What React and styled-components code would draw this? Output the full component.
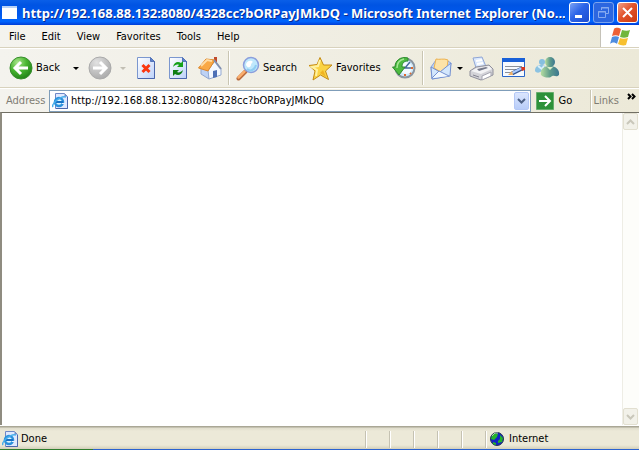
import React, { useState } from 'react';
import styled, { createGlobalStyle } from 'styled-components';

const GlobalStyle = createGlobalStyle`
  * {
    box-sizing: border-box;
  }

  body {
    margin: 0;
    background: #ece9d8;
    font-family: 'DejaVu Sans Condensed', 'Noto Sans', sans-serif;
    font-size: 11px;
    line-height: 14px;
    color: #000;
  }

  button, input {
    font: inherit;
    color: inherit;
  }

  svg {
    display: block;
    flex: none;
  }
`;

const Window = styled.div`
  display: flex;
  flex-direction: column;
  min-height: 100vh;
`;

// Title bar
const TitleBar = styled.header`
  display: flex;
  align-items: center;
  gap: 4px;
  height: 25px;
  padding: 0 1px 0 2px;
  background: linear-gradient(#0a5fe8 0, #0054e3 20%, #0058ee 60%, #0066ff 85%, #003dd7 100%);
`;

const Title = styled.h1`
  flex: 1;
  min-width: 0;
  margin: 0;
  overflow: hidden;
  white-space: nowrap;
  font-family: 'Noto Sans', sans-serif;
  font-size: 13px;
  font-weight: bold;
  line-height: 18px;
  color: #fff;
  text-shadow: 1px 1px #0a2a8c;
`;

const Caption = styled.div`
  display: flex;
  gap: 3px;
`;

const CaptionButton = styled.button`
  display: flex;
  align-items: center;
  justify-content: center;
  width: 21px;
  height: 21px;
  padding: 0;
  border: 1px solid ${(p) => (p.$dim ? '#7ba4ee' : '#fff')};
  border-radius: 3px;
  background: ${(p) =>
    p.$close
      ? 'linear-gradient(135deg, #f0a088, #e2542c 45%, #cb3a10)'
      : p.$dim
        ? '#2c66e0'
        : 'linear-gradient(135deg, #7ba2f4, #2c64e8 45%, #1c4cd0)'};
`;

// Menu bar
const MenuBar = styled.nav`
  display: flex;
  height: 23px;
  border-bottom: 1px solid #d8d2bd;
  background: linear-gradient(90deg, #f4f3ee, #ece9d8);
`;

const MenuButton = styled.button`
  height: 22px;
  padding: 2px 8px 0;
  border: 0;
  background: none;

  &:first-child {
    margin-left: 1px;
  }
`;

const Brand = styled.div`
  display: flex;
  align-items: center;
  justify-content: center;
  width: 39px;
  margin-left: auto;
  border-left: 1px solid #c5c2b8;
  background: #fff;
`;

// Toolbar
const Toolbar = styled.div`
  display: flex;
  align-items: center;
  height: 40px;
  padding-left: 5px;
  border-top: 1px solid #fff;
  border-bottom: 1px solid #d8d2bd;
  background: linear-gradient(90deg, #f4f3ee, #ece9d8);
`;

const ToolButton = styled.button`
  display: flex;
  align-items: center;
  gap: 3px;
  height: 34px;
  padding: 0 ${(p) => (p.$labelled ? 7 : 4)}px 0 4px;
  border: 0;
  background: none;
`;

const DropButton = styled.button`
  display: flex;
  align-items: center;
  justify-content: center;
  width: ${(p) => p.$width}px;
  height: 34px;
  padding: 0;
  border: 0;
  background: none;
`;

const Divider = styled.span`
  flex: none;
  width: 2px;
  height: 34px;
  margin: 0 2px;
  border-left: 1px solid #c9c5b2;
  border-right: 1px solid #fff;
`;

// Address bar
const AddressBar = styled.form`
  display: flex;
  align-items: center;
  gap: 5px;
  height: 24px;
  padding: 0 3px 0 6px;
  border-top: 1px solid #fff;
  background: linear-gradient(90deg, #f4f3ee, #ece9d8);
`;

const AddressLabel = styled.label`
  width: 38px;
  color: #7f7c73;
`;

const AddressBox = styled.div`
  display: flex;
  flex: 1;
  align-items: center;
  min-width: 0;
  height: 22px;
  padding: 0 1px 0 2px;
  border: 1px solid #7f9db9;
  background: #fff;
`;

const AddressInput = styled.input`
  flex: 1;
  min-width: 0;
  height: 18px;
  padding: 0 3px;
  border: 0;
  outline: 0;
  background: none;
`;

const ComboButton = styled.button`
  display: flex;
  align-items: center;
  justify-content: center;
  width: 15px;
  height: 18px;
  padding: 0;
  border: 1px solid #b4c8f6;
  border-radius: 2px;
  background: linear-gradient(#dbe6fe, #b8cdf9);
`;

const GoButton = styled.button`
  display: flex;
  align-items: center;
  gap: 5px;
  width: 49px;
  padding: 0;
  border: 0;
  background: none;
`;

const Links = styled.button`
  display: flex;
  align-items: center;
  gap: 8px;
  height: 22px;
  padding: 0 0 0 3px;
  border: 0;
  border-left: 1px solid #c9c5b2;
  background: none;
  box-shadow: inset 1px 0 #fff;
  color: #7f7c73;
`;

// Page area
const Viewport = styled.main`
  display: flex;
  flex: 1;
  border: solid #716f64;
  border-width: 1px 0 0 2px;
  border-left-color: #8f8c80;
  background: #fff;
`;

const Page = styled.div`
  flex: 1;
`;

const Scrollbar = styled.div`
  display: flex;
  flex-direction: column;
  justify-content: space-between;
  width: 17px;
  padding-right: 1px;
  border-left: 1px solid #eeede5;
  background: #fdfdfa;
`;

const ScrollButton = styled.button`
  display: flex;
  align-items: center;
  justify-content: center;
  width: 15px;
  height: 17px;
  padding: 0;
  border: 1px solid #e2dfd0;
  border-radius: 2px;
  background: #f2f1e9;
`;

// Status bar
const StatusBar = styled.footer`
  display: flex;
  align-items: center;
  height: 24px;
  padding-top: 3px;
  border-top: 1px solid #fff;
  background: linear-gradient(#aaa796 0, #aaa796 1px, #dfdccb 2px, #ece9d8 5px, #ece9d8 19px, #d3cfba 100%);
`;

const StatusText = styled.div`
  display: flex;
  flex: 1;
  align-items: center;
  gap: 3px;
  padding-left: 2px;
`;

const Pane = styled.div`
  display: flex;
  align-items: center;
  gap: 5px;
  width: ${(p) => p.$width || 24}px;
  height: 17px;
  padding-left: 4px;
  border-left: 1px solid #c5c2b2;
  box-shadow: inset 1px 0 #fff;
`;

const TaskbarEdge = styled.div`
  height: 1px;
  background: linear-gradient(90deg, #2f7d2d 93px, #2a62d0 93px);
`;

const Arrow = ({ color = '#000', size = 6 }) => (
  <svg width={size} height="3" viewBox="0 0 6 3" fill={color}>
    <path d="M0 0h6L3 3z" />
  </svg>
);

const RoundArrow = ({ id, forward }) => (
  <svg width="24" height="24" viewBox="0 0 24 24">
    <defs>
      <radialGradient id={id} cx=".35" cy=".25" r=".8">
        <stop offset="0" stopColor={forward ? '#e2e2e2' : '#a9e58c'} />
        <stop offset=".5" stopColor={forward ? '#c4c4c4' : '#48b530'} />
        <stop offset="1" stopColor={forward ? '#aaa' : '#1f7f16'} />
      </radialGradient>
    </defs>
    <circle cx="12" cy="12" r="11" fill={`url(#${id})`} stroke={forward ? '#aaa' : '#388e2d'} />
    <path
      d={forward ? 'M5 12h13M12 6l6 6-6 6' : 'M19 12H6M12 6l-6 6 6 6'}
      fill="none"
      stroke="#fff"
      strokeWidth="3"
    />
  </svg>
);

const Sheet = ({ children }) => (
  <svg width="24" height="24" viewBox="0 0 24 24">
    <defs>
      <linearGradient id="sheet" x1="0" y1="0" x2="1" y2="1">
        <stop offset="0" stopColor="#fff" />
        <stop offset="1" stopColor="#bdd2fa" />
      </linearGradient>
    </defs>
    <path d="M3.500 1.500h13l4 4v17h-17z" fill="url(#sheet)" stroke="#7b97cf" />
    <path d="M20.500 5v17.500H4" fill="none" stroke="#4a66ad" />
    <path d="M16.500 1.500v4h4z" fill="#5b80cc" stroke="#5474b8" />
    {children}
  </svg>
);

const StopIcon = () => (
  <Sheet>
    <path d="M8.500 9l7 7M15.500 9l-7 7" stroke="#fa3711" strokeWidth="3" />
  </Sheet>
);

const RefreshIcon = () => (
  <Sheet>
    <path d="M7 11c1-5 5-6 8-4l2-2v6h-6l2-2c-2-1-4 0-6 2z" fill="#16a01a" />
    <path d="M17 14c-1 5-5 6-8 4l-2 2v-6h6l-2 2c2 1 4 0 6-2z" fill="#0d7e14" />
  </Sheet>
);

const HomeIcon = () => (
  <svg width="24" height="26" viewBox="0 0 24 26">
    <path d="M16 2h3v7h-3z" fill="#c04a2c" />
    <path d="M3 13l8 1v10l-8-5z" fill="#bdd2f5" stroke="#8fa5cf" />
    <path d="M10 15l7-9 6 8v6l-12 4z" fill="#f3f8ff" stroke="#93a9d2" />
    <path d="M.5 13L8 4l9 1-7 11z" fill="#f9a845" stroke="#dc8529" strokeLinejoin="round" />
    <path d="M3 11l6-6 5 1" fill="none" stroke="#ffdca5" strokeWidth="2" />
    <path d="M16 5l7 9" stroke="#8190b0" strokeWidth="2" />
    <path d="M15 16l4-1v7l-4 1z" fill="#4d70b6" />
  </svg>
);

const SearchIcon = () => (
  <svg width="24" height="25" viewBox="0 0 24 25">
    <path d="M2.500 22.500l7-7" stroke="#b8683a" strokeWidth="4" strokeLinecap="round" />
    <path d="M2.500 21.500l6-6" stroke="#f9ad6c" strokeWidth="2.500" strokeLinecap="round" />
    <circle cx="15" cy="9" r="7.500" fill="#bfe8fc" stroke="#8b9fdc" strokeWidth="1.500" />
    <path d="M10 9c0-3 3-5 6-4 2 1-1 2-1 4s-3 4-5 0z" fill="#fff" />
    <path d="M11 13c3 3 8 1 9-4" fill="none" stroke="#8fcdf2" strokeWidth="2" />
  </svg>
);

const StarIcon = () => (
  <svg width="25" height="25" viewBox="0 0 25 25">
    <path
      d="M12 1.500l3.500 7.500 8.500 0-6.500 6 3 8.500-8-4.500-7.500 5 2-9-6-5.500 8-1z"
      fill="#fbd344"
      stroke="#c48b15"
      strokeLinejoin="round"
    />
    <path d="M12 4l-2 6-6 1 5 3-1 6" fill="none" stroke="#fff2a2" strokeWidth="2" />
    <path d="M15 14l3 7-6-4" fill="#f0b323" />
  </svg>
);

const HistoryIcon = () => (
  <svg width="24" height="24" viewBox="0 0 24 24">
    <circle cx="13" cy="12" r="9.500" fill="#cfe9fa" stroke="#8b959f" strokeWidth="2" />
    <circle cx="14" cy="12" r="6" fill="#f3faff" />
    <path d="M19 12h2M13 18v2M18 17l1 1" stroke="#e0692d" strokeWidth="2" />
    <path d="M18 6l-5 6h6" fill="none" stroke="#466a9c" strokeWidth="1.500" />
    <path d="M16 2C8 0 3 5 3 11H.5L7 19l6-8h-3c0-4 2-6 6-6z" fill="#4dbb40" stroke="#2c8a2d" />
    <path d="M12 3C8 4 5 7 5 12" fill="none" stroke="#a6e695" strokeWidth="1.500" />
  </svg>
);

const MailIcon = () => (
  <svg width="22" height="24" viewBox="0 0 22 24">
    <path d="M1 11l5-7h10l5 3-2 13-17 3z" fill="#b9d2f7" stroke="#8aa4dc" />
    <path d="M4 12l2-9c3 1 8-1 12 1l-1 8-6 4z" fill="#fde3a8" stroke="#eeb34f" />
    <path d="M1 11l9 5 11-9-1 13-18 3z" fill="#d3e7fd" stroke="#7591d0" />
    <path d="M2 22l7-7 10 5" fill="#f1f8ff" stroke="#7591d0" />
  </svg>
);

const PrintIcon = () => (
  <svg width="25" height="25" viewBox="0 0 25 25">
    <path d="M4 2l9-1 5 12-10 2z" fill="#dbe9fd" stroke="#90a6d5" />
    <path d="M7 5l6-1M8 8l6-1" stroke="#fff" strokeWidth="2" />
    <path d="M1 15l6-4 13-2 4 4v6l-12 5-11-4z" fill="#d3d3d8" stroke="#8f8f9b" />
    <path d="M2 15l6-3 12-2 3 3-11 5z" fill="#f3f3f5" />
    <path d="M8 13l9-2 2 1-9 3z" fill="#75798a" />
    <path d="M13 20l9-4v4l-9 4z" fill="#fff" stroke="#a5a5b0" />
    <path d="M4 19l6 2" stroke="#858592" />
  </svg>
);

const EditIcon = () => (
  <svg width="25" height="24" viewBox="0 0 25 24">
    <path d="M.5 2.500h22v18H.5z" fill="#f6faff" stroke="#2a66c8" />
    <path d="M0 2h23v4H0z" fill="#1860d8" />
    <path d="M3 10.500h17M3 13.500h12M3 16.500h6" stroke="#8b919b" />
    <path d="M10 17.500l10-5" stroke="#33538e" strokeWidth="4" />
    <path d="M10 17l10-5" stroke="#a9cbff" strokeWidth="2" />
    <path d="M6 19l4-4 1 4z" fill="#f2b164" />
    <path d="M19 11h4v3l-3 1z" fill="#d6371e" />
  </svg>
);

const MessengerIcon = () => (
  <svg width="25" height="24" viewBox="0 0 25 24">
    <defs>
      <linearGradient id="buddy">
        <stop offset="0" stopColor="#b5dda0" />
        <stop offset=".5" stopColor="#5f9c8c" />
        <stop offset="1" stopColor="#3c7690" />
      </linearGradient>
    </defs>
    <circle cx="7" cy="6" r="3" fill="#86bfe0" />
    <path d="M0 15c0-5 3-6 7-6 3 0 5 3 4 6-2 3-4-1-6 1-1 1-4 1-5-1z" fill="#8cc3e2" />
    <path d="M3 10l4 3 2-3" fill="none" stroke="#d9f0fb" strokeWidth="2" />
    <path d="M6 19c-1-6 3-9 9-9s10 4 9 9c-3 3-5-1-8 2-2 1-7 1-10-2z" fill="url(#buddy)" />
    <path d="M12 11l3 3 3-3" fill="#dceec9" />
    <circle cx="15" cy="6" r="5" fill="url(#buddy)" />
  </svg>
);

const PageIcon = () => (
  <svg width="16" height="16" viewBox="0 0 16 16">
    <path d="M3.500.5h9l3 3v12h-12z" fill="#dfe9ff" stroke="#6f88c6" />
    <path d="M15.500 4v11.500H4" fill="none" stroke="#4c66ac" />
    <path d="M12.500.5v3h3z" fill="#738bc4" />
    <circle cx="7" cy="9" r="4" fill="#d8f3ff" stroke="#2c91dc" strokeWidth="2.500" />
    <path d="M4 9h7" stroke="#1871c5" strokeWidth="2" />
    <path d="M1 14C-1 11 9 2 14 4" fill="none" stroke="#49aeea" strokeWidth="1.500" />
    <path d="M10 10h3v1h-3z" fill="#e8f0ff" />
  </svg>
);

const WindowsFlag = () => (
  <svg width="21" height="19" viewBox="0 0 21 19">
    <path d="M4 2c2-2 5-1 7 0L9 9C7 8 4 8 2 9z" fill="#ee6136" />
    <path d="M12 3c3 1 6 1 8 0l-2 7c-3 1-5 1-8 0z" fill="#71b63b" />
    <path d="M2 10c2-1 5-1 7 0l-2 7c-2-2-5-2-7 0z" fill="#4f8de0" />
    <path d="M10 11c2 1 5 1 8 0l-2 7c-3 1-6 0-8-1z" fill="#f7c02f" />
  </svg>
);

const Globe = () => (
  <svg width="14" height="14" viewBox="0 0 14 14">
    <circle cx="7" cy="7" r="6.500" fill="#1323c4" stroke="#26334c" />
    <path d="M2 3l3-2 3 1-1 3-3 3-3-1zM10 3l3 3-1 4-4 1 0-2 2-2z" fill="#25b52b" />
    <path d="M3 10l3 1 0 2-3-1z" fill="#25b52b" />
    <path d="M2 4l3-3 3 0" fill="none" stroke="#b3c9b4" />
  </svg>
);

const Chevron = ({ up, color }) => (
  <svg width="9" height="6" viewBox="0 0 9 6" fill="none" stroke={color} strokeWidth="2">
    <path d={up ? 'M1 5l3.500-3.500L8 5' : 'M1 1l3.500 3.500L8 1'} />
  </svg>
);

const menus = ['File', 'Edit', 'View', 'Favorites', 'Tools', 'Help'];

const App = () => {
  const [address, setAddress] = useState('http://192.168.88.132:8080/4328cc?bORPayJMkDQ');

  return (
    <>
      <GlobalStyle />
      <Window>
        <TitleBar>
          <svg width="16" height="16" viewBox="0 0 16 16">
            <path d="M0 1h15v13H0z" fill="#fff" />
            <path d="M0 1h15v2H0z" fill="#b9d2f6" />
          </svg>
          <Title>http://192.168.88.132:8080/4328cc?bORPayJMkDQ - Microsoft Internet Explorer (No...</Title>
          <Caption>
            <CaptionButton aria-label="Minimize">
              <svg width="15" height="15">
                <path d="M3 10h7v3H3z" fill="#fff" />
              </svg>
            </CaptionButton>
            <CaptionButton $dim aria-label="Restore">
              <svg width="15" height="15" fill="none" stroke="#86aaf0">
                <path d="M5.500 5V2.500h7v6H10M5 3h8M2.500 6.500h7v6h-7zM2 7h8" />
              </svg>
            </CaptionButton>
            <CaptionButton $close aria-label="Close">
              <svg width="15" height="15" stroke="#fff" strokeWidth="2">
                <path d="M3 3l9 9M12 3l-9 9" />
              </svg>
            </CaptionButton>
          </Caption>
        </TitleBar>

        <MenuBar>
          {menus.map((menu) => (
            <MenuButton key={menu}>{menu}</MenuButton>
          ))}
          <Brand>
            <WindowsFlag />
          </Brand>
        </MenuBar>

        <Toolbar>
          <ToolButton $labelled>
            <RoundArrow id="back" />
            Back
          </ToolButton>
          <DropButton $width={17} aria-label="Back history"><Arrow /></DropButton>
          <ToolButton aria-label="Forward"><RoundArrow id="forward" forward /></ToolButton>
          <DropButton $width={14} aria-label="Forward history"><Arrow color="#c2bfb4" /></DropButton>
          <ToolButton aria-label="Stop"><StopIcon /></ToolButton>
          <ToolButton aria-label="Refresh"><RefreshIcon /></ToolButton>
          <ToolButton aria-label="Home"><HomeIcon /></ToolButton>
          <Divider />
          <ToolButton $labelled>
            <SearchIcon />
            Search
          </ToolButton>
          <ToolButton $labelled>
            <StarIcon />
            Favorites
          </ToolButton>
          <ToolButton aria-label="History"><HistoryIcon /></ToolButton>
          <Divider />
          <ToolButton aria-label="Mail"><MailIcon /></ToolButton>
          <DropButton $width={9} aria-label="Mail options"><Arrow /></DropButton>
          <ToolButton aria-label="Print"><PrintIcon /></ToolButton>
          <ToolButton aria-label="Edit"><EditIcon /></ToolButton>
          <ToolButton aria-label="Messenger"><MessengerIcon /></ToolButton>
        </Toolbar>

        <AddressBar onSubmit={(e) => e.preventDefault()}>
          <AddressLabel htmlFor="address">Address</AddressLabel>
          <AddressBox>
            <PageIcon />
            <AddressInput
              id="address"
              type="text"
              value={address}
              onChange={(e) => setAddress(e.target.value)}
            />
            <ComboButton type="button" aria-label="Show addresses">
              <Chevron color="#4d6185" />
            </ComboButton>
          </AddressBox>
          <GoButton type="submit">
            <svg width="18" height="18" viewBox="0 0 18 18">
              <path d="M.5.5h17v17H.5z" fill="#2d9139" stroke="#65ad6b" />
              <path d="M3 9h10M9 4l5 5-5 5" fill="none" stroke="#fff" strokeWidth="2" />
            </svg>
            Go
          </GoButton>
          <Links type="button">
            Links
            <svg width="9" height="16" viewBox="0 0 9 16" fill="none" stroke="#000" strokeWidth="2">
              <path d="M1 1l2.500 2.500L1 6M5 1l2.500 2.500L5 6" />
            </svg>
          </Links>
        </AddressBar>

        <Viewport>
          <Page />
          <Scrollbar>
            <ScrollButton aria-label="Scroll up"><Chevron up color="#c9c7ba" /></ScrollButton>
            <ScrollButton aria-label="Scroll down"><Chevron color="#c9c7ba" /></ScrollButton>
          </Scrollbar>
        </Viewport>

        <StatusBar>
          <StatusText>
            <PageIcon />
            Done
          </StatusText>
          <Pane />
          <Pane />
          <Pane />
          <Pane />
          <Pane />
          <Pane $width={154}>
            <Globe />
            Internet
          </Pane>
        </StatusBar>
        <TaskbarEdge />
      </Window>
    </>
  );
};

export default App;
